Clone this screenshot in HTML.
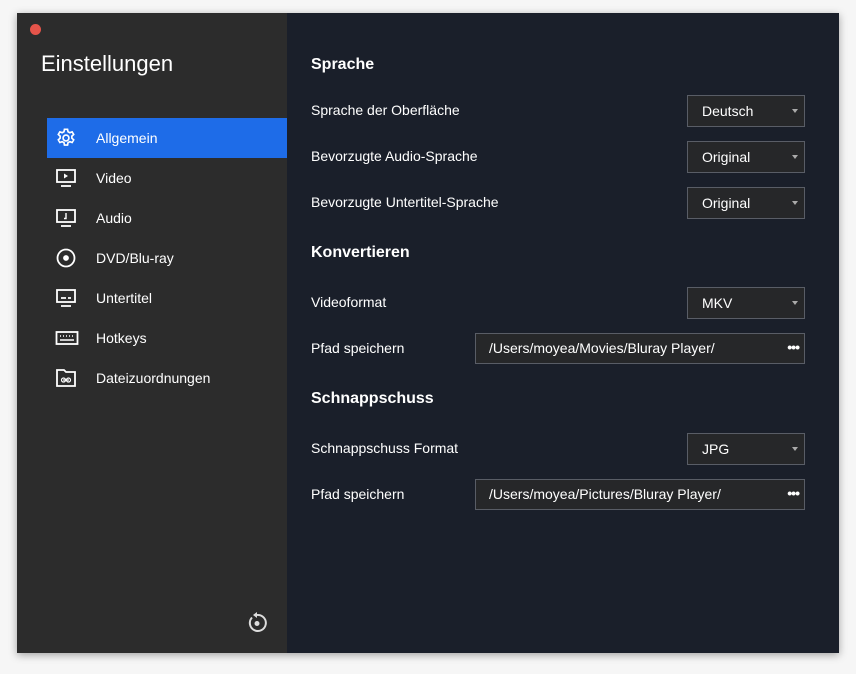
<!DOCTYPE html>
<html><head><meta charset="utf-8"><style>
*{margin:0;padding:0;box-sizing:border-box}
body{width:856px;height:674px;background:#f6f6f6;font-family:"Liberation Sans",sans-serif;position:relative;overflow:hidden}
.win{position:absolute;left:17px;top:13px;width:822px;height:640px;box-shadow:0 2px 8px rgba(0,0,0,.35);overflow:hidden}
.side{position:absolute;left:0;top:0;width:270px;height:640px;background:#2c2c2c}
.main{position:absolute;left:270px;top:0;width:552px;height:640px;background:#1a1f2a}
.dot{position:absolute;left:13px;top:11px;width:11px;height:11px;border-radius:50%;background:#e5544a}
.title{position:absolute;left:24px;top:38px;color:#fff;font-size:22px}
.item{position:absolute;left:30px;width:240px;height:40px;color:#fff;font-size:14px;line-height:40px;padding-left:49px}
.item.sel{background:#1e6ce8}
.item svg{position:absolute;left:8px;top:9px}
.h{position:absolute;left:24px;color:#fff;font-weight:bold;font-size:16px}
.l{position:absolute;left:24px;color:#fff;font-size:14px}
.dd{position:absolute;left:400px;width:118px;height:32px;border:1px solid #595d66;background:#262729;color:#fff;font-size:14px;line-height:30px;padding-left:14px}
.dd:after{content:"";position:absolute;right:6px;top:13px;border-left:3px solid transparent;border-right:3px solid transparent;border-top:4px solid #aaa}
.pf{position:absolute;left:188px;width:330px;height:31px;border:1px solid #595d66;background:#262729;color:#fff;font-size:14px;line-height:29px;padding-left:13px}
.pf b{position:absolute;right:5px;top:-1px;font-size:14px;letter-spacing:-1px}
</style></head><body>
<div class="win">
<div class="side">
<div class="dot"></div>
<div class="title">Einstellungen</div>
<div class="item sel" style="top:105px"><svg width="22" height="22" viewBox="0 0 24 24" fill="none" stroke="#fff" stroke-width="1.8"><circle cx="12" cy="12" r="3.2"/><path d="M10.3 2.5h3.4l.5 2.6 2 1.1 2.5-.9 1.7 2.9-2 1.8v2.2l2 1.8-1.7 2.9-2.5-.9-2 1.1-.5 2.6h-3.4l-.5-2.6-2-1.1-2.5.9-1.7-2.9 2-1.8v-2.2l-2-1.8 1.7-2.9 2.5.9 2-1.1z"/></svg>Allgemein</div>
<div class="item" style="top:145px"><svg width="22" height="22" viewBox="0 0 22 22" fill="none" stroke="#fff" stroke-width="1.8"><rect x="2" y="3" width="18" height="12"/><path d="M6 19h10"/><path d="M9 6.5v5l4-2.5z" fill="#fff" stroke="none"/></svg>Video</div>
<div class="item" style="top:185px"><svg width="22" height="22" viewBox="0 0 22 22" fill="none" stroke="#fff" stroke-width="1.8"><rect x="2" y="3" width="18" height="12"/><path d="M6 19h10"/><path d="M11 6v5.5h-2" stroke-width="1.4"/></svg>Audio</div>
<div class="item" style="top:225px"><svg width="22" height="22" viewBox="0 0 22 22" fill="none" stroke="#fff" stroke-width="1.8"><circle cx="11" cy="11" r="8.5"/><circle cx="11" cy="11" r="2" fill="#fff"/></svg>DVD/Blu-ray</div>
<div class="item" style="top:265px"><svg width="22" height="22" viewBox="0 0 22 22" fill="none" stroke="#fff" stroke-width="1.8"><rect x="2" y="3" width="18" height="12"/><path d="M6 19h10M6 11h5M13 11h3"/></svg>Untertitel</div>
<div class="item" style="top:305px"><svg width="24" height="22" viewBox="0 0 24 22" fill="none" stroke="#fff" stroke-width="1.8"><rect x="1.5" y="5" width="21" height="12"/><path d="M5 9h1M8 9h1M11 9h1M14 9h1M17 9h1M5 13h14" stroke-width="1.5"/></svg>Hotkeys</div>
<div class="item" style="top:345px"><svg width="22" height="22" viewBox="0 0 22 22" fill="none" stroke="#fff" stroke-width="1.8"><path d="M2 3h7l2 2h9v14H2z"/><path d="M8 13h6" stroke-width="1.2"/><circle cx="8.5" cy="13" r="2" stroke-width="1.2"/><circle cx="13.5" cy="13" r="2" stroke-width="1.2"/></svg>Dateizuordnungen</div>
<svg style="position:absolute;left:228px;top:598px" width="24" height="24" viewBox="0 0 24 24" fill="none" stroke="#ddd" stroke-width="2"><path d="M7 6.5A8 8 0 1 0 12 4h0"/><path d="M12 1v6l-4-3z" fill="#ddd" stroke="none"/><circle cx="12" cy="12.5" r="2.5" fill="#ddd" stroke="none"/></svg>
</div>
<div class="main">
<div class="h" style="top:43px">Sprache</div>
<div class="l" style="top:89px">Sprache der Oberfläche</div>
<div class="dd" style="top:82px">Deutsch</div>
<div class="l" style="top:135px">Bevorzugte Audio-Sprache</div>
<div class="dd" style="top:128px">Original</div>
<div class="l" style="top:181px">Bevorzugte Untertitel-Sprache</div>
<div class="dd" style="top:174px">Original</div>
<div class="h" style="top:231px">Konvertieren</div>
<div class="l" style="top:281px">Videoformat</div>
<div class="dd" style="top:274px">MKV</div>
<div class="l" style="top:327px">Pfad speichern</div>
<div class="pf" style="top:320px">/Users/moyea/Movies/Bluray Player/<b>•••</b></div>
<div class="h" style="top:377px">Schnappschuss</div>
<div class="l" style="top:427px">Schnappschuss Format</div>
<div class="dd" style="top:420px">JPG</div>
<div class="l" style="top:473px">Pfad speichern</div>
<div class="pf" style="top:466px">/Users/moyea/Pictures/Bluray Player/<b>•••</b></div>
</div>
</div>
</body></html>
